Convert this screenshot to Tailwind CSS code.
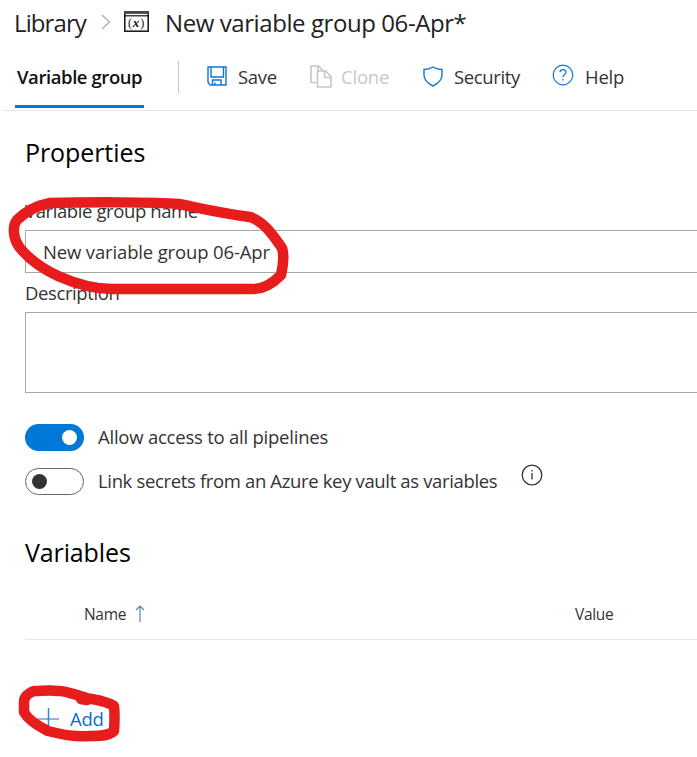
<!DOCTYPE html>
<html lang="en">
<head>
<meta charset="utf-8">
<title>Variable group</title>
<script src="https://cdn.jsdelivr.net/npm/@tailwindcss/browser@4"></script>
</head>
<body class="bg-white">
<div class="relative w-[697px] h-[757px] overflow-hidden bg-white font-['Open_Sans','Noto_Sans',sans-serif] text-[18.5px] text-[#333] whitespace-nowrap">
  <header class="flex items-center h-[46px] pl-[14px] text-[24px] text-[#222]">
    <span class="w-[87px] tracking-[-0.9px]">Library</span>
    <svg class="w-[10px] h-[18px] -mt-[3px]" viewBox="0 0 10 18" fill="none" stroke="#aaa" stroke-width="1.2"><path d="M1 2l7.5 7L1 16"/></svg>
    <svg class="w-[25px] h-[22px] ml-[13px] -mt-[3px]" viewBox="0 0 25 22"><rect x="0.8" y="1" width="23.400" height="19.200" fill="none" stroke="#111" stroke-width="1.500"/><path d="M0 1.600h25" stroke="#444" stroke-width="2.600"/><path d="M1 4.800h23" stroke="#111" stroke-width="1.200"/><text x="12.5" y="15.500" text-anchor="middle" font-family="Liberation Serif, serif" font-size="12" letter-spacing="0.8" fill="#111">(<tspan font-style="italic" font-weight="bold" font-size="13">x</tspan>)</text></svg>
    <h1 class="ml-[16px] tracking-[-0.42px]">New variable group 06-Apr*</h1>
  </header>
  <nav class="flex ml-[3px] h-[65px] border-b border-[#e8e8e8]">
    <div class="ml-3 w-[129px] h-[62px] border-b-3 border-[#0078d4] pl-0.5 leading-[61px] font-semibold text-[#111] tracking-[-0.42px]">Variable group</div>
    <div class="w-px h-8 mt-[15px] ml-[34px] bg-[#c4c4c4]"></div>
    <div class="flex items-center h-[61px] ml-[28px] w-[103px]">
      <svg class="w-5 h-5 -mt-[2px] mr-[11px]" viewBox="0 0 20 20" fill="none" stroke="#0f76d5" stroke-width="1.4"><path d="M1 1h18v18H3.500L1 16.500zM4 1v10h12.500V1M5.500 19v-5h8.500v5M8 16.500V19"/></svg>
      <span class="tracking-[-0.3px]">Save</span>
    </div>
    <div class="flex items-center h-[61px] w-[113px] text-[#c8c8c8]">
      <svg class="w-[22px] h-[23px] -mt-[1px] mr-[9px]" viewBox="0 0 22 23" fill="none" stroke="#c8c8c8" stroke-width="1.700"><path d="M7 17.500H1V1h7.500L13 5.500M8 1v5M7.500 6h8l5.500 5.500V22H7.500zM14.500 6v6.500H21"/></svg>
      <span class="tracking-[-0.2px]">Clone</span>
    </div>
    <div class="flex items-center h-[61px] w-[130px]">
      <svg class="w-5 h-[21px] -mt-[1px] mr-[11px]" viewBox="0 0 20 21" fill="none" stroke="#0f76d5" stroke-width="1.4"><path d="M10 1C7.500 2.700 4 3.500 1 3.500V9c0 5.500 5 9 9 11 4-2 9-5.500 9-11V3.500C16 3.500 12.500 2.700 10 1z"/></svg>
      <span class="tracking-[-0.36px]">Security</span>
    </div>
    <div class="flex items-center h-[61px]">
      <svg class="w-[22px] h-[22px] -mt-[3px] -ml-px mr-[11px]" viewBox="0 0 22 22" fill="none" stroke="#0f76d5" stroke-width="1.2"><circle cx="11" cy="11" r="9.800"/><path d="M8 8.300C8 6.700 9.300 5.600 11 5.600s3 1.100 3 2.600c0 2.300-3 2.400-3 5.100M11 15v1.600"/></svg>
      <span class="tracking-[-0.25px]">Help</span>
    </div>
  </nav>
  <main class="pl-[25px]">
    <h2 class="pt-[20px] h-[87px] leading-[42px] text-[25px] text-black tracking-[-0.08px]">Properties</h2>
    <label class="block h-[32px] leading-[26px] tracking-[-0.4px]">Variable group name</label>
    <div class="h-[43px] w-[690px] border border-[#a6a6a6] pl-[17px] leading-[42px] tracking-[-0.15px]">New variable group 06-Apr</div>
    <label class="block h-[39px] pt-[6px] leading-[28px] tracking-[-0.4px]">Description</label>
    <div class="h-[81px] w-[690px] border border-[#a6a6a6]"></div>
    <div class="flex items-center mt-[31px] h-[27px]">
      <div class="w-[59px] h-[27px] rounded-full bg-[#0078d7] flex items-center justify-end pr-[7px]"><i class="size-[15px] rounded-full bg-white"></i></div>
      <span class="ml-[14px] -mt-0.5 tracking-[-0.23px]">Allow access to all pipelines</span>
    </div>
    <div class="flex items-center mt-[17px] h-[27px]">
      <div class="w-[59px] h-[27px] rounded-full border border-[#666] flex items-center pl-[6px]"><i class="size-[15px] rounded-full bg-[#333]"></i></div>
      <span class="ml-[14px] -mt-0.5 w-[423px] tracking-[-0.35px]">Link secrets from an Azure key vault as variables</span>
      <svg class="w-[22px] h-[22px] -mt-[13px]" viewBox="0 0 22 22" fill="none" stroke="#333" stroke-width="1.3"><circle cx="11" cy="11" r="9.800"/><path d="M11 9v6.500M11 6v1.500"/></svg>
    </div>
    <h2 class="mt-[36px] h-[42px] leading-[42px] text-[25px] text-black tracking-[-0.12px]">Variables</h2>
    <div class="flex h-[67px] pt-[28px] leading-[26px] text-[15.500px] border-b border-[#e8e8e8]">
      <span class="ml-[59px] w-[43px] tracking-[-0.3px]">Name</span>
      <svg class="ml-[8px] mt-[4px] w-[10px] h-[17px]" viewBox="0 0 10 17" fill="none" stroke="#5b87a8" stroke-width="1.2"><path d="M5 17V1M1 5l4-4 4 4"/></svg>
      <span class="ml-[430px] tracking-[-0.3px]">Value</span>
    </div>
    <div class="flex items-center mt-[65px] h-[28px] ml-[12px] text-[#106ebe]">
      <svg class="w-[22px] h-[22px]" viewBox="0 0 22 22"><path d="M0 11h22" stroke="#7c96d2" stroke-width="1.500"/><path d="M11.500 0v22" stroke="#1494dd" stroke-width="1.500"/></svg>
      <span class="ml-[11px] tracking-[-0.3px]">Add</span>
    </div>
  </main>
  <svg class="absolute inset-0 w-[697px] h-[757px] pointer-events-none" viewBox="0 0 697 757" fill="none" stroke="#e71c1c" stroke-width="10.500" stroke-linecap="round" stroke-linejoin="round">
    <path d="M50 203 C35 206 24 213 17 220 C12 226 13 239 20 248 C30 260 45 270 58 276 C76 284 95 289 112 289 L254 289 C266 289 275 281 281 275 Q285 258 282 248 C274 237 265 222 250 217 C220 213 195 207 179 204 C155 202 90 202 50 203z"/>
    <path d="M34 691 C28 693 24 697 24 702 L24 712 C28 720 40 727 48 731 C64 735 74 737 91 736 C103 736 110 735 114 731 Q115 715 114 706 C106 701 96 700 87 698 C75 695 65 690 58 691 C50 690 42 691 34 691z M81 699l6 1"/>
  </svg>
</div>
</body>
</html>
